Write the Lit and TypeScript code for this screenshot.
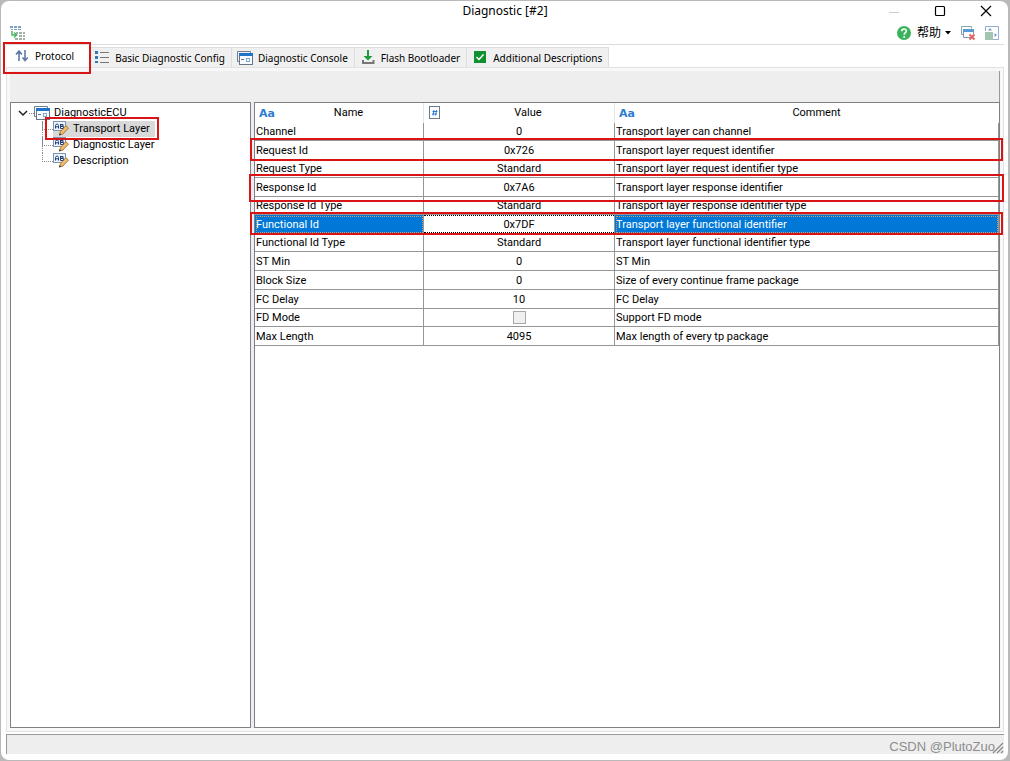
import { LitElement, html, css, svg } from "lit";
import { customElement, property, state } from "lit/decorators.js";
import { classMap } from "lit/directives/class-map.js";

const icons: Record<string, unknown> = {
  grid: svg`<svg width="16" height="16" viewBox="0 0 16 16">
    <g fill="#7da0c4"><rect x="0" y="1" width="3" height="2"/><rect x="4" y="1" width="3" height="2"/><rect x="8" y="1" width="3" height="2"/><rect x="1" y="4" width="2" height="1"/><rect x="4" y="4" width="3" height="1"/><rect x="8" y="4" width="3" height="1"/></g>
    <g fill="#a3b0a6"><rect x="6" y="7" width="2" height="2"/><rect x="9" y="7" width="3" height="2"/><rect x="13" y="7" width="2" height="2"/><rect x="9" y="10" width="3" height="2"/><rect x="13" y="10" width="2" height="2"/><rect x="5" y="13" width="3" height="2"/><rect x="9" y="13" width="3" height="2"/><rect x="13" y="13" width="2" height="2"/></g>
    <path d="M2 6v4h4M4 7.5L6.700 10 4 12.500" fill="none" stroke="#4db868" stroke-width="1.500"/></svg>`,
  arrows: svg`<svg width="16" height="16" viewBox="0 0 16 16" fill="none" stroke="#5f7ba5" stroke-width="1.600"><path d="M5 13V3M2 6.500L5 3l3 3.500M11 2v10.500M8.500 9.500l2.500 3 2.800-3"/></svg>`,
  list: svg`<svg width="16" height="16" viewBox="0 0 16 16"><g fill="#2f78b7"><rect x="1" y="1" width="3" height="3"/><rect x="1" y="6" width="3" height="3"/><rect x="1" y="11" width="3" height="2"/></g><path d="M6 2.500h9M6 7.500h9M6 12.500h9" stroke="#777"/></svg>`,
  console: svg`<svg width="16" height="16" viewBox="0 0 16 16"><path d="M2.500 11.500h-2V1.500h13v2" fill="none" stroke="#6f7f90"/><rect x="2.500" y="3.500" width="13" height="11" fill="#f8fbff" stroke="#667687"/><path d="M2 3h14v3H2z" fill="#1f74c8"/><path d="M4 9.500h3" stroke="#667687"/><rect x="9.500" y="8.500" width="3" height="3" fill="none" stroke="#80a8d4"/></svg>`,
  download: svg`<svg width="16" height="16" viewBox="0 0 16 16"><path d="M8 0v8" stroke="#1d9a3a" stroke-width="2"/><path d="M3.500 6h9L8 10.500z" fill="#1d9a3a"/><path d="M3 10v3h10.500v-3" fill="none" stroke="#777" stroke-width="2"/></svg>`,
  check: svg`<svg width="16" height="16" viewBox="0 0 16 16"><rect x="2" y="1" width="12" height="12" fill="#109030"/><path d="M4.500 7l2.500 2.500 4.500-5" fill="none" stroke="#fff" stroke-width="1.500"/></svg>`,
  edit: svg`<svg width="16" height="16" viewBox="0 0 16 16"><rect x=".5" y="0.500" width="12" height="9" fill="#eaf2fb" stroke="#7e95b5"/><path d="M2.500 7.500V4.500l1-1.500h1l1 1.500v3M2.500 5.800h3M7.500 3v4.500M7.500 3.500h2.500v1.600H7.500M7.500 5.500h3v2h-3" fill="none" stroke="#20427c"/><path d="M6.500 14l.8-3.300 5.500-6 2.700 2.400-5.700 6z" fill="#f0bd66" stroke="#94622b" stroke-width=".8"/><path d="M6 14.500l.8-2.200 1.400 1.300z" fill="#333"/></svg>`,
  help: svg`<svg width="16" height="16" viewBox="0 0 16 16"><circle cx="7" cy="8" r="7" fill="#3bb35c"/><path d="M4.700 6.300c0-3.200 4.800-3 4.700-.2 0 1.600-2.200 1.700-2.200 3.600" fill="none" stroke="#fff" stroke-width="1.600"/><circle cx="7.200" cy="11.900" r="1" fill="#fff"/></svg>`,
  closeWin: svg`<svg width="16" height="16" viewBox="0 0 16 16"><path d="M3 9.500H1.500v-8h10v2" fill="none" stroke="#86a8ae"/><path d="M10 12.500H3.500v-8h10V9" fill="#fff" stroke="#7d9ab8"/><path d="M3 4h11v3H3z" fill="#5a9bd4"/><path d="M9.500 9.500l5 5m0-5l-5 5" stroke="#e0605c" stroke-width="1.800"/></svg>`,
  dock: svg`<svg width="16" height="16" viewBox="0 0 16 16"><path d="M1.500 6V1.500h13v13H9" fill="none" stroke="#8fb0cc"/><rect x="1" y="7" width="8" height="8" fill="#a4c4b2"/><path d="M4 5.500L6 3l2 2.500zM10.500 8l2.500 2-2.500 2z" fill="#6f9cc6"/></svg>`,
  hash: svg`<svg width="14" height="14" viewBox="-1 0 14 14"><rect x=".5" y=".5" width="10" height="12" fill="#fff" stroke="#6a7a88"/><path d="M5 4l-1 5.500M7.500 4l-1 5.500M3.500 5.500h5M3 8h5" stroke="#2f7ccf"/></svg>`,
};

interface Row {
  name: string;
  value: string;
  comment: string;
  kind?: "check" | "edit";
  compact?: boolean;
  mark?: "tight" | "wide";
}

const rows: Row[] = [
  { name: "Channel", value: "0", comment: "Transport layer can channel", compact: true },
  { name: "Request Id", value: "0x726", comment: "Transport layer request identifier", mark: "tight" },
  { name: "Request Type", value: "Standard", comment: "Transport layer request identifier type", compact: true },
  { name: "Response Id", value: "0x7A6", comment: "Transport layer response identifier", mark: "wide" },
  { name: "Response Id Type", value: "Standard", comment: "Transport layer response identifier type", compact: true },
  { name: "Functional Id", value: "0x7DF", comment: "Transport layer functional identifier", kind: "edit", mark: "tight" },
  { name: "Functional Id Type", value: "Standard", comment: "Transport layer functional identifier type", compact: true },
  { name: "ST Min", value: "0", comment: "ST Min" },
  { name: "Block Size", value: "0", comment: "Size of every continue frame package" },
  { name: "FC Delay", value: "10", comment: "FC Delay" },
  { name: "FD Mode", value: "", comment: "Support FD mode", kind: "check", compact: true },
  { name: "Max Length", value: "4095", comment: "Max length of every tp package" },
];

@customElement("param-grid")
export class ParamGrid extends LitElement {
  static styles = css`
    :host { display: block; }
    table { width: 100%; table-layout: fixed; border-spacing: 0; }
    .c-name { width: 169px; }
    .c-value { width: 191px; }
    th { height: 20px; padding: 0; font-weight: 400; border-right: 1px solid #e5e5e5; }
    th:last-child { border-right: 0; }
    .head { display: flex; align-items: center; height: 20px; padding-left: 4px; }
    .head span { flex: 1; }
    .head b { color: #2b7cd0; font: 700 11px "DejaVu Sans", sans-serif; width: 15px; }
    td { box-sizing: border-box; height: 19px; padding: 0 1px; line-height: 17px; white-space: nowrap;
      border: solid #969696; border-width: 0 1px 1px 0; }
    .compact td { height: 18px; }
    td:nth-child(2) { text-align: center; }
    tr { position: relative; }
    .selected td { background: #0078d7; color: #fff; outline: 1px dotted #d09a6a; outline-offset: -2px; }
    .selected td:nth-child(2) { background: #fff; color: #000; outline: 0; padding: 0; }
    .marked td:first-child::after { content: ""; position: absolute; z-index: 1; inset: -3px -4px -1px -5px; border: 2px solid #d91414; pointer-events: none; }
    .wide td:first-child::after { inset: -4px -5px -5px -6px; }
    .text { box-sizing: border-box; display: block; width: 100%; height: 18px; padding: 0; font: inherit; text-align: center;
      border: dotted #000; border-width: 1px 0; border-radius: 0; background: #fff; outline: 0; }
    .box { appearance: none; display: block; width: 13px; height: 13px; margin: 0 auto; border: 1px solid #a8a8a8; background: #f0f0f0; }
    .box:checked { background: #0078d7; }
  `;

  private cell(r: Row) {
    if (r.kind === "edit") return html`<input class="text" aria-label=${r.name} .value=${r.value}>`;
    if (r.kind === "check") return html`<input class="box" type="checkbox" aria-label=${r.name}>`;
    return r.value;
  }

  render() {
    return html`<table>
      <colgroup><col class="c-name"><col class="c-value"><col></colgroup>
      <thead><tr>
        <th><div class="head"><b>Aa</b><span>Name</span></div></th>
        <th><div class="head">${icons.hash}<span>Value</span></div></th>
        <th><div class="head"><b>Aa</b><span>Comment</span></div></th>
      </tr></thead>
      <tbody>${rows.map(r => html`<tr class=${classMap({ compact: !!r.compact, marked: !!r.mark, wide: r.mark === "wide", selected: r.kind === "edit" })}>
        <td>${r.name}</td><td>${this.cell(r)}</td><td>${r.comment}</td></tr>`)}
      </tbody></table>`;
  }
}

@customElement("layer-tree")
export class LayerTree extends LitElement {
  @state() private current = "Transport Layer";
  static styles = css`
    :host { display: block; padding: 2px 0 0 7px; }
    button { font: inherit; color: inherit; border: 0; background: none; padding: 0; display: flex; align-items: center; height: 16px; white-space: nowrap; }
    .root svg { flex: none; }
    .lead { width: 5px; border-top: 1px dotted #888; margin-left: 1px; }
    .root span { margin-left: 4px; }
    ul { list-style: none; margin: 0 0 0 24px; padding: 0; }
    li { display: flex; align-items: flex-start; height: 16px; }
    .branch { width: 10px; height: 8px; border: dotted #888; border-width: 0 0 1px 1px; }
    li:not(:last-child) .stem { height: 16px; border-left: 1px dotted #888; margin-right: -1px; }
    li button { position: relative; padding-right: 5px; }
    li button span { margin-left: 4px; }
    .on { background: #d9d9d9; }
    .on::after { content: ""; position: absolute; z-index: 1; inset: -4px -4px -3px -8px; border: 2px solid #d91414; }
  `;
  render() {
    return html`<button class="root" aria-expanded="true">
        <svg width="10" height="10" viewBox="0 0 10 10"><path d="M1 3l4 4 4-4" fill="none" stroke="#222" stroke-width="1.500"/></svg>
        <i class="lead"></i>${icons.console}<span>DiagnosticECU</span></button>
      <ul>${["Transport Layer", "Diagnostic Layer", "Description"].map(n => html`<li><i class="stem"></i><i class="branch"></i>
        <button class=${classMap({ on: n === this.current })} @click=${() => (this.current = n)}>${icons.edit}<span>${n}</span></button></li>`)}</ul>`;
  }
}

@customElement("app-root")
export class AppRoot extends LitElement {
  @property() heading = "Diagnostic [#2]";
  @state() private tab = "Protocol";
  static styles = css`
    :host { box-sizing: border-box; display: flex; min-height: 100vh; padding: 1px 2px 1px 1px; background: #b9b9b9;
      font: 11px/16px Roboto, "Noto Sans CJK SC", sans-serif; color: #000; }
    .window { flex: 1; min-width: 0; display: flex; flex-direction: column; background: #fff; border-radius: 8px; padding: 0 4px 6px 5px; }
    button { font: inherit; color: inherit; border: 0; background: none; padding: 0; display: flex; align-items: center; }
    .title { display: grid; grid-template-columns: 1fr auto 1fr; align-items: center; height: 20px; }
    h1 { grid-column: 2; margin: 0; font: 400 12px/20px "Noto Sans", sans-serif; }
    .controls { display: flex; justify-content: flex-end; gap: 30px; padding-right: 10px; }
    .tools { display: flex; align-items: center; height: 23px; padding: 0 4px 0 4px; border-bottom: 1px solid #dcdcdc; }
    .tools .help { margin-left: auto; margin-right: 9px; font-size: 12px; gap: 4px; }
    .tools .dock { margin-left: 8px; }
    .tabs { display: flex; align-items: flex-end; height: 22px; border-bottom: 1px solid #e2e2e2; }
    .tab { height: 20px; padding: 1px 6px 1px 5px; gap: 5px; background: #f0f0f0; border: solid #dedede; border-width: 1px 1px 0 0;
      font: 10px/16px "Noto Sans", sans-serif; white-space: nowrap; }
    .tab.on { position: relative; background: #fff; border-color: transparent; padding: 0 14px 4px 8px; }
    .tab.on::after { content: ""; position: absolute; z-index: 1; inset: -6px -3px -7px -3px; border: 2px solid #d91414; }
    .page { flex: 1; display: flex; flex-direction: column; padding: 3px; border: solid #e2e2e2; border-width: 0 1px 1px 1px; background: #f8f8fa; }
    .band { height: 31px; background: #eee; border-right: 1px solid #999; }
    .panes { flex: 1; display: grid; grid-template-columns: 241px 1fr; gap: 3px; background: #ececf2; }
    .pane { border: 1px solid #808080; background: #fff; min-width: 0; }
    .status { display: flex; justify-content: flex-end; align-items: center; height: 19px; margin-top: 2px; background: #eee; border: solid #999; border-width: 1px 0 0 1px; }
    .credit { font: 13px/18px "Liberation Sans", sans-serif; color: #8d8d8d; padding-top: 4px; margin-right: -3px; }
    .grip { flex: none; align-self: flex-end; }
  `;
  render() {
    const tabs = [["Protocol", "arrows"], ["Basic Diagnostic Config", "list"], ["Diagnostic Console", "console"], ["Flash Bootloader", "download"], ["Additional Descriptions", "check"]];
    return html`<div class="window">
      <header class="title"><h1>${this.heading}</h1>
        <div class="controls">
          <button aria-label="Minimize"><svg width="16" height="16"><path d="M3 9.500h10" stroke="#ccc"/></svg></button>
          <button aria-label="Maximize"><svg width="16" height="16"><rect x="3.500" y="3.500" width="9" height="9" rx="1" fill="none" stroke="#000" stroke-width="1.200"/></svg></button>
          <button aria-label="Close"><svg width="16" height="16"><path d="M3 3l10 10M13 3L3 13" stroke="#000" stroke-width="1.200"/></svg></button>
        </div></header>
      <div class="tools">
        <button aria-label="Layout">${icons.grid}</button>
        <button class="help">${icons.help}<span>帮助</span><svg width="6" height="4"><path d="M0 0h6L3 3.500z"/></svg></button>
        <button aria-label="Close window">${icons.closeWin}</button>
        <button class="dock" aria-label="Dock">${icons.dock}</button>
      </div>
      <nav class="tabs" role="tablist">${tabs.map(([n, i]) => html`<button role="tab" class=${classMap({ tab: true, on: this.tab === n })}
        aria-selected=${this.tab === n} @click=${() => (this.tab = n)}>${icons[i]}<span>${n}</span></button>`)}</nav>
      <main class="page"><div class="band"></div>
        <div class="panes"><layer-tree class="pane"></layer-tree><param-grid class="pane"></param-grid></div></main>
      <footer class="status"><span class="credit">CSDN @PlutoZuo</span>
        <svg class="grip" width="12" height="12"><path d="M1 11L11 1M5 11l6-6M9 11l2-2" stroke="#888" stroke-width="1.200"/></svg></footer>
    </div>`;
  }
}
